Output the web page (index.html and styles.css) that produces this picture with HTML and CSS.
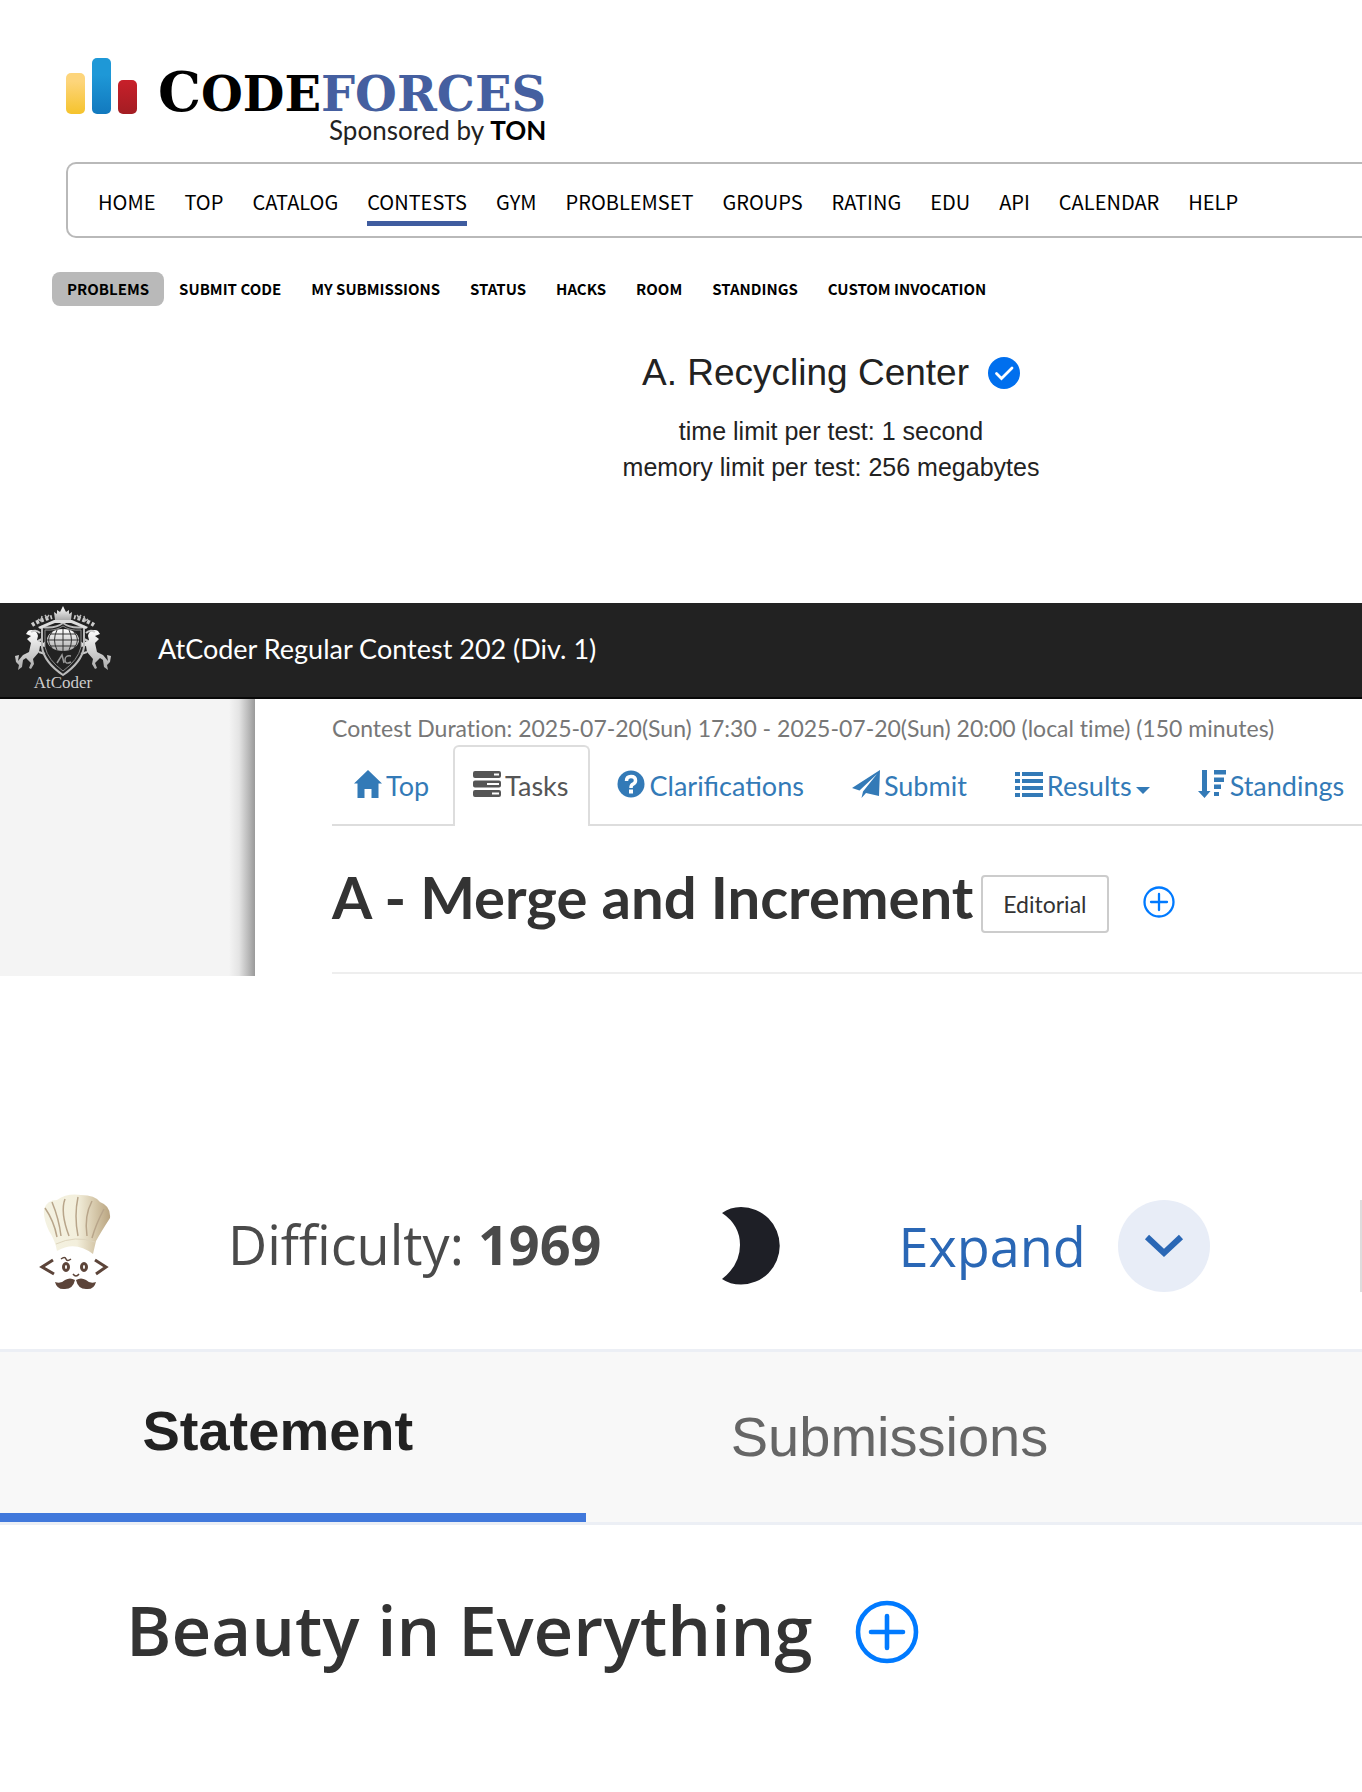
FILE: index.html
```html
<!DOCTYPE html>
<html lang="en">
<head>
<meta charset="utf-8">
<title>Contest problem headers</title>
<meta name="viewport" content="width=device-width, initial-scale=1">
<link rel="stylesheet" href="styles.css">
</head>
<body>
<section class="cf">
  <header class="cf-brand">
    <svg class="cf-bars" viewBox="0 0 72 56" aria-hidden="true">
      <defs>
        <linearGradient id="gy" x2="0" y2="1"><stop offset="0.2" stop-color="#fdd57b"/><stop offset="1" stop-color="#f5c32c"/></linearGradient>
        <linearGradient id="gb" x2="0" y2="1"><stop offset="0.3" stop-color="#1e98d7"/><stop offset="1" stop-color="#1279be"/></linearGradient>
        <linearGradient id="gr" x2="0" y2="1"><stop offset="0" stop-color="#c8202a"/><stop offset="1" stop-color="#a31d23"/></linearGradient>
      </defs>
      <rect x="0" y="15" width="19" height="41" rx="5" fill="url(#gy)"/>
      <rect x="26" y="0" width="19" height="56" rx="5" fill="url(#gb)"/>
      <rect x="52" y="22" width="19" height="34" rx="5" fill="url(#gr)"/>
    </svg>
    <div class="cf-words">
      <div class="cf-name"><span class="cf-cap">C</span>ODE<span class="cf-blue">FORCES</span></div>
      <div class="cf-sponsor">Sponsored by <b>TON</b></div>
    </div>
  </header>
  <nav class="cf-menu">
    <a href="#">HOME</a><a href="#">TOP</a><a href="#">CATALOG</a><a href="#" class="current">CONTESTS</a><a href="#">GYM</a><a href="#">PROBLEMSET</a><a href="#">GROUPS</a><a href="#">RATING</a><a href="#">EDU</a><a href="#">API</a><a href="#">CALENDAR</a><a href="#">HELP</a>
  </nav>
  <nav class="cf-sub">
    <a href="#" class="current">PROBLEMS</a><a href="#">SUBMIT CODE</a><a href="#">MY SUBMISSIONS</a><a href="#">STATUS</a><a href="#">HACKS</a><a href="#">ROOM</a><a href="#">STANDINGS</a><a href="#">CUSTOM INVOCATION</a>
  </nav>
  <div class="cf-problem">
    <div class="cf-title">
      <h1>A. Recycling Center</h1>
      <svg class="check" viewBox="0 0 32 32" role="img" aria-label="Added"><circle cx="16" cy="16" r="16" fill="#006fee"/><path d="M8.500 16.500L13.500 21.500 24 11" fill="none" stroke="#fff" stroke-width="2.800" stroke-linecap="round"/></svg>
    </div>
    <p>time limit per test: 1 second</p>
    <p>memory limit per test: 256 megabytes</p>
  </div>
</section>

<section class="ac">
  <header class="ac-bar">
    <a href="#" class="ac-logo" aria-label="AtCoder home">
      <svg viewBox="0 0 98 84" aria-hidden="true">
        <defs><linearGradient id="silver" x2="0" y2="1"><stop offset="0" stop-color="#fff"/><stop offset="1" stop-color="#aaa"/></linearGradient>
        <g id="horse">
          <path d="M14 26C17 24 23 25 24 31L23 35 29 38 32 36 34 41 31 42 26 41 25 47 19 54 20 59 17 64 15 63 17 58 12 53 9 55 8 62 4 65 5 60 2 57 1 51 5 50 4 56 9 50 15 47 17 38 13 34 17 31 12 29Z" fill="url(#silver)"/>
          <path d="M17 27Q22 24 26 28M25 47L31 49M24 36L28 34" fill="none" stroke="#ccc" stroke-width="2"/>
        </g></defs>
        <use href="#horse"/>
        <use href="#horse" transform="translate(98 0) scale(-1 1)"/>
        <path d="M28 22Q41 24 49 18 57 24 70 22V42Q68 57 49 70 30 57 28 42Z" fill="none" stroke="#bbb" stroke-width="2"/>
        <path d="M31 25Q42 26 49 21 56 26 67 25V42Q64 55 49 66 34 55 31 42Z" fill="#222" stroke="#888"/>
        <ellipse cx="49" cy="35" rx="16" ry="11" fill="url(#silver)"/>
        <path d="M33 35H65M36 29H62M36 41H62M49 24V46M43 25Q38 35 43 45M55 25Q60 35 55 45M38 27Q31 35 38 43M60 27Q67 35 60 43" fill="none" stroke="#333"/>
        <path d="M43 58L48 50 50 58M57 51Q51 50 51 55T57 57" fill="none" stroke="#999" stroke-width="1.500"/>
        <path d="M41 15L40 7 43 9 43 5 46 7 49 1 52 7 55 5 55 9 58 7 57 15Z" fill="url(#silver)"/>
        <path d="M24 22L40 15H58L74 22 72 24 57 18H41L26 24Z" fill="#ddd"/>
        <path d="M18 20Q26 15 38 12M80 20Q72 15 60 12" fill="none" stroke="#ccc" stroke-width="4" stroke-dasharray="3 2"/>
        <path d="M24 14L27 16 28 11M31 10L33 13 35 10M74 14L71 16 70 11M67 10L65 13 63 10" fill="none" stroke="#bbb" stroke-width="1.500"/>
      </svg>
      <span>AtCoder</span>
    </a>
    <a href="#" class="ac-contest">AtCoder Regular Contest 202 (Div. 1)</a>
  </header>
  <div class="ac-body">
    <div class="ac-side"></div>
    <main class="ac-main">
      <p class="ac-time">Contest Duration: 2025-07-20(Sun) 17:30 - 2025-07-20(Sun) 20:00 (local time) (150 minutes)</p>
      <nav class="ac-tabs">
        <a href="#"><svg viewBox="0 0 28 28"><path d="M14 0L28 13.500H24.500V28H17.500V19H10.500V28H3.500V13.500H0Z"/></svg>Top</a>
        <a href="#" class="current"><svg viewBox="0 0 28 28"><path fill-rule="evenodd" d="M2 1H26Q28 1 28 3V6Q28 8 26 8H2Q0 8 0 6V3Q0 1 2 1ZM21 3.500V5.500H26V3.500ZM2 10.500H26Q28 10.500 28 12.500V15.500Q28 17.500 26 17.500H2Q0 17.500 0 15.500V12.500Q0 10.500 2 10.500ZM14 13V15H26V13ZM2 20H26Q28 20 28 22V25Q28 27 26 27H2Q0 27 0 25V22Q0 20 2 20ZM19 22.500V24.500H26V22.500Z"/></svg>Tasks</a>
        <a href="#"><svg viewBox="0 0 28 28"><circle cx="14" cy="14" r="13.500"/><path d="M9.500 11Q9.500 6.500 14 6.500T18.500 10.500Q18.500 13 16 14.200 14 15 14 18" fill="none" stroke="#fff" stroke-width="3.500"/><path d="M12 19.500H16V23.500H12Z" fill="#fff"/></svg>Clarifications</a>
        <a href="#"><svg viewBox="0 0 28 28"><path d="M28 0L0 18 7.500 20.500 25 4 11 21.500 9.500 28 14 23 27 26Z"/></svg>Submit</a>
        <a href="#"><svg viewBox="0 0 28 28"><path d="M0 2H5V6H0ZM7 2H28V6H7ZM0 9H5V13H0ZM7 9H28V13H7ZM0 16H5V20H0ZM7 16H28V20H7ZM0 23H5V27H0ZM7 23H28V27H7Z"/></svg>Results<i class="caret"></i></a>
        <a href="#"><svg viewBox="0 0 28 28"><path d="M4 0H9V21H12.500L6.500 28 0 21H4ZM16 0H28V4.500H16ZM16 7.500H26V12H16ZM16 14.500H23V19H16ZM16 22H21V26H16Z"/></svg>Standings</a>
      </nav>
      <div class="ac-title">
        <h2>A - Merge and Increment</h2>
        <a href="#" class="ac-editorial">Editorial</a>
        <button class="plus" aria-label="Add problem"><svg viewBox="0 0 32 32"><circle cx="16" cy="16" r="14.500"/><path d="M16 8V24M8 16H24"/></svg></button>
      </div>
    </main>
  </div>
</section>

<section class="cc">
  <header class="cc-bar">
    <svg class="cc-chef" viewBox="0 0 76 96" role="img" aria-label="CodeChef">
      <defs><linearGradient id="hat"><stop offset="0" stop-color="#f4f2e2"/><stop offset="0.500" stop-color="#f3efdc"/><stop offset="0.750" stop-color="#d8cbae"/><stop offset="1" stop-color="#b9a480"/></linearGradient></defs>
      <path d="M18 57Q16 46 10 37 4 24 5 15 8 6 18 6 28-1 42 1 56 1 61 8 72 12 71 24 62 38 57 47L54 60Q36 46 18 57Z" fill="url(#hat)"/>
      <path d="M17 50Q36 41 56 48" fill="none" stroke="#ded5bd"/>
      <path d="M6 14Q15 27 18 43M13 8Q20 25 22 42M26 5Q21 18 30 42M39 3Q35 22 39 42M53 7Q45 22 48 42M65 15Q57 30 53 44" fill="none" stroke="#b8a58a" stroke-width="1.500"/>
      <g fill="none" stroke="#5c4439" stroke-width="3"><path d="M14 66L3 73 15 80M56 66L67 73 57 80"/><ellipse cx="27" cy="73" rx="2.500" ry="3.500"/><ellipse cx="45" cy="73" rx="2.500" ry="3.500"/><path d="M22 65Q26 62 27 65T32 65M34 80Q37 84 40 80" stroke-width="1.500"/></g>
      <path d="M36 86Q31 83 26 86 22 90 16 88 18 96 26 95 34 95 36 86ZM37 86Q42 83 47 86 51 90 57 88 55 96 47 95 39 95 37 86Z" fill="#5c4439"/>
    </svg>
    <p class="cc-diff">Difficulty: <b>1969</b></p>
    <button class="cc-moon" aria-label="Dark mode"><svg viewBox="0 0 58 78"><path d="M0 6Q8 0 19 0A38.500 38.500 0 0 1 19 77.500Q8 77.500 0 72 18 58 18 38T0 6Z" fill="#1e1f26"/></svg></button>
    <button class="cc-expand">Expand <span class="cc-round"><svg viewBox="0 0 40 24"><path d="M3 3L20 19 37 3"/></svg></span></button>
    <span class="cc-rule"></span>
  </header>
  <nav class="cc-tabs">
    <a href="#" class="current">Statement</a>
    <a href="#">Submissions</a>
  </nav>
  <div class="cc-title">
    <h2>Beauty in Everything</h2>
    <button class="plus big" aria-label="Add problem"><svg viewBox="0 0 32 32"><circle cx="16" cy="16" r="14.500"/><path d="M16 8V24M8 16H24"/></svg></button>
  </div>
</section>
</body>
</html>
```
FILE: styles.css
```css
* { box-sizing: border-box; }
body { margin: 0; background: #fff; overflow-x: hidden; }
h1, h2, p { margin: 0; }
a { color: inherit; text-decoration: none; }
button { padding: 0; border: 0; background: none; font: inherit; color: inherit; cursor: pointer; }
svg { display: block; flex: none; }

/* Codeforces */
.cf { padding: 58px 0 118px 66px; font-family: "Liberation Sans", Arial, sans-serif; color: #222; }
.cf-brand { display: flex; gap: 20px; height: 104px; }
.cf-bars { width: 72px; height: 56px; }
.cf-words { display: flex; flex-direction: column; align-items: flex-end; }
.cf-name { padding-top: 6px; font: bold 48px/56px "DejaVu Serif", serif; color: #000; height: 58px; }
.cf-cap { font-size: 54px; }
.cf-blue { color: #455fa0; }
.cf-sponsor { font: 26px/28px Lato, sans-serif; }
.cf-sponsor b { color: #000; }
.cf-menu { display: flex; gap: 29px; height: 76px; padding: 20px 30px; border: 2px solid #b9b9b9; border-right: 0; border-radius: 10px 0 0 10px; font: 20px/36px "Noto Sans CJK SC", sans-serif; color: #000; white-space: nowrap; }
.cf-menu .current { height: 42px; border-bottom: 5px solid #3f5c9f; }
.cf-sub { display: flex; margin: 34px 0 0 -14px; font: bold 15px/34px "Noto Sans CJK SC", sans-serif; color: #000; white-space: nowrap; }
.cf-sub a { padding: 0 15px; border-radius: 8px; }
.cf-sub .current { background: #b9b9b9; }
.cf-problem { padding: 44px 0 0 234px; text-align: center; font-size: 25px; line-height: 36px; }
.cf-title { display: flex; justify-content: center; align-items: center; gap: 19px; height: 46px; margin-bottom: 17px; }
.cf-title h1 { font-size: 37px; font-weight: 400; }
.check { width: 32px; height: 32px; }

/* AtCoder */
.ac { font-family: Lato, sans-serif; color: #333; }
.ac-bar { display: flex; align-items: center; height: 96px; padding: 0 0 4px 14px; background: #222; border-bottom: 2px solid #080808; color: #fff; }
.ac-logo { width: 98px; margin-right: 46px; color: #ccc; font: 17px/16px "Liberation Serif", serif; text-align: center; }
.ac-logo svg { width: 98px; height: 84px; margin-bottom: -14px; }
.ac-contest { font-size: 27px; }
.ac-body { display: flex; }
.ac-side { width: 255px; flex: none; background: linear-gradient(to left, #999, #bbb 7px, #e4e4e4 16px, #f4f4f4 26px); }
.ac-main { flex: 1; min-width: 0; padding: 14px 0 2px 77px; }
.ac-time { color: #777; font-size: 23px; line-height: 30px; padding-bottom: 2px; white-space: nowrap; font-variant-ligatures: none; }
.ac-tabs { display: flex; height: 81px; border-bottom: 2px solid #ddd; color: #337ab7; font-size: 27px; line-height: 32px; white-space: nowrap; }
.ac-tabs a { display: flex; align-items: flex-start; gap: 4px; height: 81px; padding: 23px 19px 0 25px; border: 2px solid transparent; border-bottom: 0; }
.ac-tabs a:first-child { padding: 23px 22px 0 20px; }
.ac-tabs .current { color: #555; background: #fff; border-color: #ddd; border-radius: 6px 6px 0 0; padding: 23px 20px 0 18px; }
.ac-tabs svg { width: 28px; height: 28px; fill: currentColor; }
.caret { margin-top: 17px; border: 7px solid transparent; border-top-color: currentColor; border-bottom: 0; }
.ac-title { display: flex; align-items: center; height: 148px; padding-top: 6px; border-bottom: 2px solid #eee; }
.ac-title h2 { margin-bottom: 10px; font-size: 58px; line-height: 64px; font-weight: 700; white-space: nowrap; }
.ac-editorial { margin: 4px 34px 0 8px; padding: 0 20px; border: 2px solid #ccc; border-radius: 4px; font-size: 23px; line-height: 54px; }
.plus { width: 32px; height: 32px; flex: none; }
.plus svg { width: 100%; height: 100%; fill: none; stroke: #007aff; stroke-width: 2.300; stroke-linecap: round; }

/* CodeChef */
.cc { padding-top: 218px; font-family: "Open Sans", sans-serif; color: #4a4a4a; }
.cc-bar { display: flex; height: 155px; padding-left: 39px; font-size: 54px; line-height: 92px; white-space: nowrap; }
.cc-chef { width: 76px; height: 96px; }
.cc-diff { margin: 4px 0 0 113px; }
.cc-moon { width: 58px; height: 78px; margin: 13px 118px 0 121px; }
.cc-moon svg { width: 58px; height: 78px; }
.cc-expand { display: flex; gap: 32px; height: 92px; margin-top: 6px; color: #2a67b5; }
.cc-round { display: grid; place-items: center; width: 92px; height: 92px; border-radius: 50%; background: #e8edf7; }
.cc-round svg { width: 40px; height: 24px; fill: none; stroke: #2a67b5; stroke-width: 6; }
.cc-rule { width: 2px; height: 92px; margin: 6px 0 0 auto; background: #ddd; }
.cc-tabs { display: flex; border: solid #eceff5; border-width: 3px 0; background: #f8f8f8; font: 56px/64px "Liberation Sans", Arial, sans-serif; color: #666; }
.cc-tabs a { width: 43%; height: 170px; padding: 53px 0 0 22px; text-align: center; }
.cc-tabs .current { padding: 47px 30px 0 0; color: #222; font-weight: 700; border-bottom: 9px solid #4178db; }
.cc-title { display: flex; align-items: center; gap: 42px; padding: 59px 0 108px 126px; color: #333; }
.cc-title h2 { margin-bottom: 6px; font-size: 69px; line-height: 90px; font-weight: 600; white-space: nowrap; }
.plus.big { width: 64px; height: 64px; }
```
